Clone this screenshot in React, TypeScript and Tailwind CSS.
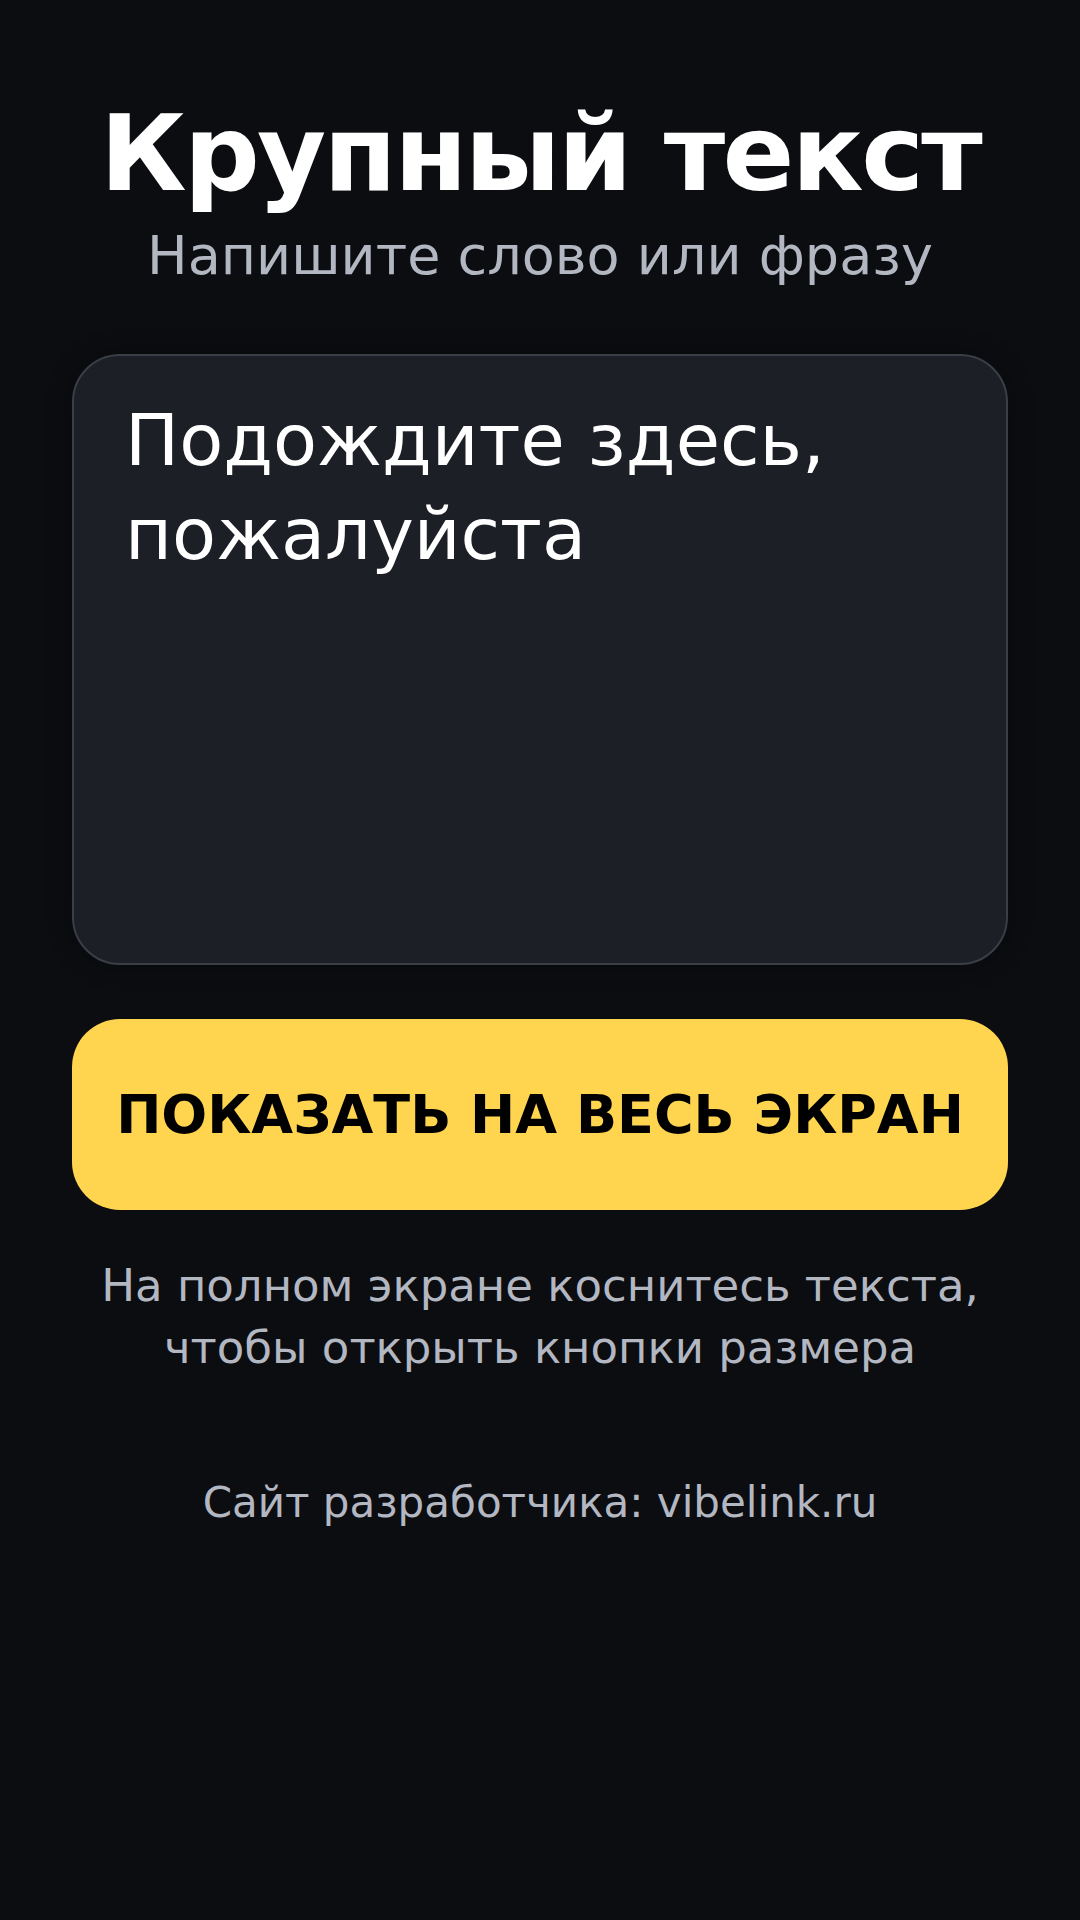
export default function App() {
  return (
    <div
      className="min-h-[1920px] w-full bg-[#0b0d11] flex flex-col items-center px-[72px] pt-[96px]"
      style={{ fontFamily: '"DejaVu Sans", "Noto Sans", sans-serif' }}
    >
      {/* Header */}
      <h1 className="text-[106px] leading-[116px] font-bold tracking-[-0.025em] text-white text-center">
        Крупный текст
      </h1>
      <p className="mt-[9px] text-[54px] leading-[70px] text-[#b3b7c1] text-center">
        Напишите слово или фразу
      </p>

      {/* Input */}
      <textarea
        className="mt-[63px] w-full h-[611px] resize-none rounded-[48px] border-2 border-[#3a3e47] bg-[#1c1f26] px-[51px] pt-[37px] pb-[37px] text-[72px] leading-[94px] text-white outline-none shadow-[0_0_24px_rgba(0,0,0,0.35)]"
        style={{ fontFamily: '"DejaVu Sans", "Noto Sans", sans-serif' }}
        defaultValue="Подождите здесь, пожалуйста"
      />

      {/* Action */}
      <button className="mt-[54px] w-full h-[191px] rounded-[48px] bg-[#ffd54f] text-[54px] font-bold text-black flex items-center justify-center">
        ПОКАЗАТЬ НА ВЕСЬ ЭКРАН
      </button>

      <p className="mt-[45px] text-[45px] leading-[62px] text-[#b3b7c1] text-center">
        На полном экране коснитесь текста,
        <br />
        чтобы открыть кнопки размера
      </p>

      <p className="mt-[95px] text-[42px] leading-[58px] text-[#b3b7c1] text-center">
        Сайт разработчика: vibelink.ru
      </p>
    </div>
  )
}
